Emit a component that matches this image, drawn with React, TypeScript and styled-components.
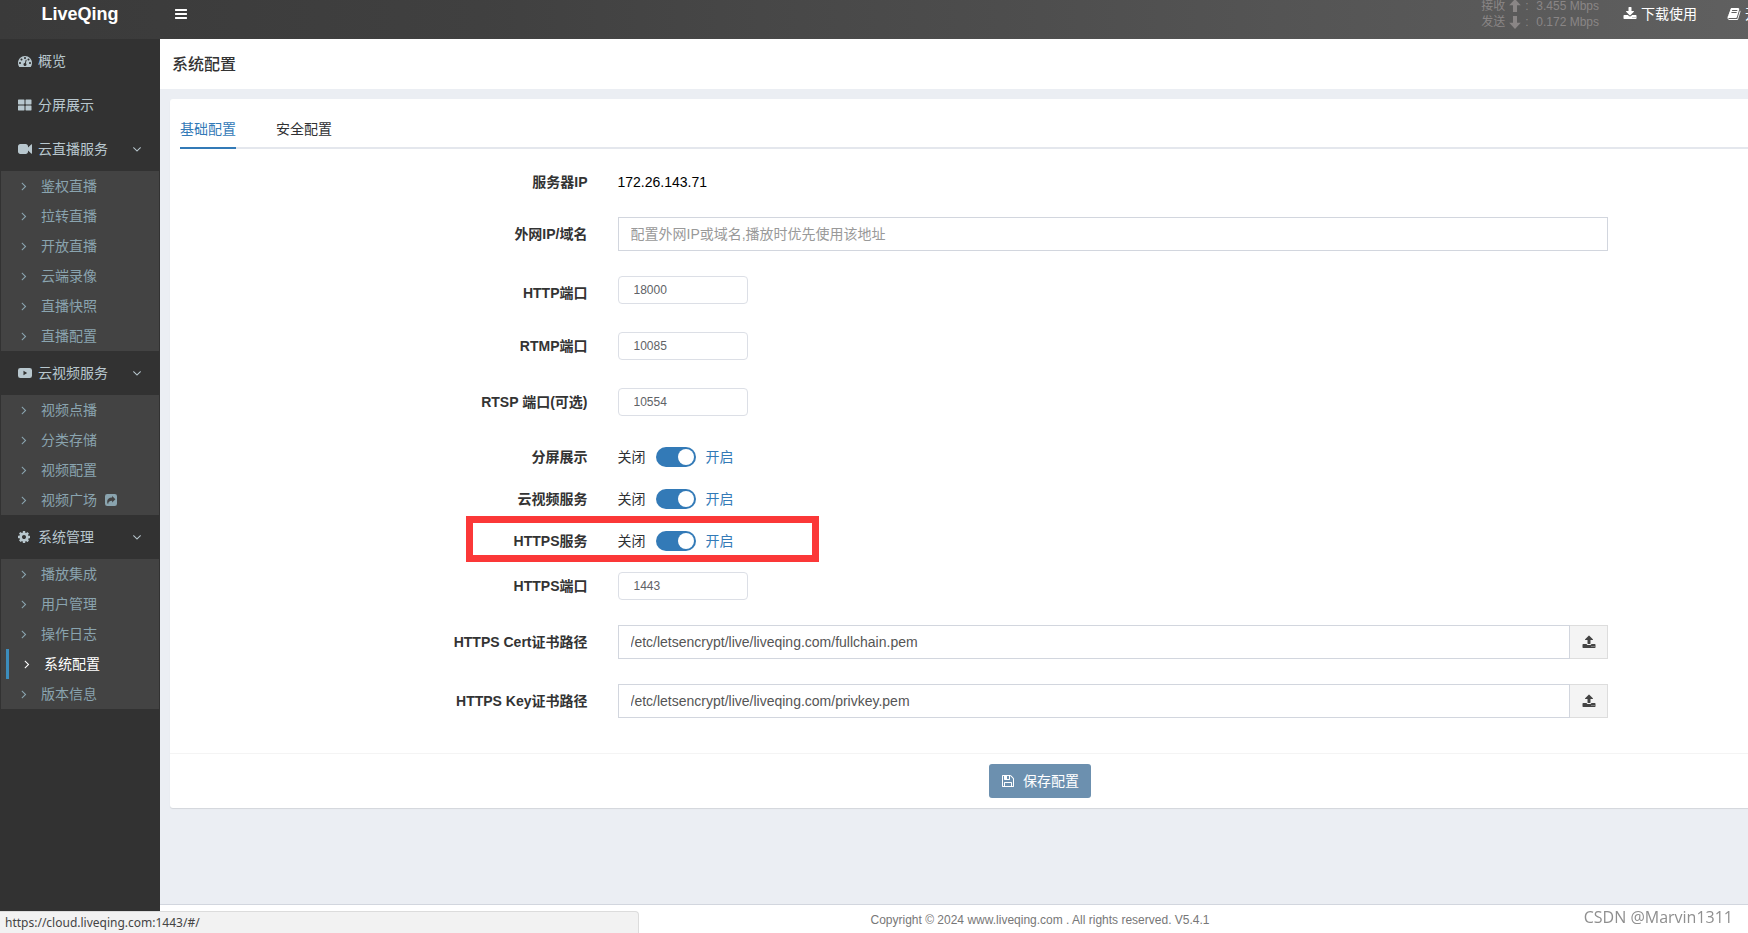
import React, { useId, useState } from "react";
import styled, { createGlobalStyle, css } from "styled-components";

const GlobalStyle = createGlobalStyle`
  *, *::before, *::after { box-sizing: border-box; }
  body {
    margin: 0;
    background: #ebeef3;
    color: #333;
    font: 14px/20px "Liberation Sans", Arial, "Noto Sans CJK SC", sans-serif;
  }
  button, input { font: inherit; color: inherit; }
  ul { list-style: none; margin: 0; padding: 0; }
  a { color: inherit; text-decoration: none; }
`;

/* ---------- icons ---------- */

const PATHS = {
  bars: "M1664 1344v128q0 26-19 45t-45 19h-1408q-26 0-45-19t-19-45v-128q0-26 19-45t45-19h1408q26 0 45 19t19 45zm0-512v128q0 26-19 45t-45 19h-1408q-26 0-45-19t-19-45v-128q0-26 19-45t45-19h1408q26 0 45 19t19 45zm0-512v128q0 26-19 45t-45 19h-1408q-26 0-45-19t-19-45v-128q0-26 19-45t45-19h1408q26 0 45 19t19 45z",
  angleRight:
    "M1171 960q0 13-10 23l-466 466q-10 10-23 10t-23-10l-50-50q-10-10-10-23t10-23l393-393-393-393q-10-10-10-23t10-23l50-50q10-10 23-10t23 10l466 466q10 10 10 23z",
  angleDown:
    "M1395 736q0 13-10 23l-466 466q-10 10-23 10t-23-10l-466-466q-10-10-10-23t10-23l50-50q10-10 23-10t23 10l393 393 393-393q10-10 23-10t23 10l50 50q10 10 10 23z",
  download:
    "M1344 1344q0-26-19-45t-45-19-45 19-19 45 19 45 45 19 45-19 19-45zm256 0q0-26-19-45t-45-19-45 19-19 45 19 45 45 19 45-19 19-45zm128-224v320q0 40-28 68t-68 28h-1472q-40 0-68-28t-28-68v-320q0-40 28-68t68-28h465l135 136q58 56 136 56t136-56l136-136h464q40 0 68 28t28 68zm-325-569q17 41-14 70l-448 448q-18 19-45 19t-45-19l-448-448q-31-29-14-70 17-39 59-39h256v-448q0-26 19-45t45-19h256q26 0 45 19t19 45v448h256q42 0 59 39z",
  upload:
    "M1344 1472q0-26-19-45t-45-19-45 19-19 45 19 45 45 19 45-19 19-45zm256 0q0-26-19-45t-45-19-45 19-19 45 19 45 45 19 45-19 19-45zm128-224v320q0 40-28 68t-68 28h-1472q-40 0-68-28t-28-68v-320q0-40 28-68t68-28h427q21 56 70.5 92t110.5 36h256q61 0 110.5-36t70.5-92h427q40 0 68 28t28 68zm-325-648q-17 40-59 40h-256v448q0 26-19 45t-45 19h-256q-26 0-45-19t-19-45v-448h-256q-42 0-59-40-17-39 14-69l448-448q18-19 45-19t45 19l448 448q31 30 14 69z",
  grid: "M832 1024v512q0 60-60 60h-712q-60 0-60-60v-512q0-60 60-60h712q60 0 60 60zm0-768v512q0 60-60 60h-712q-60 0-60-60v-512q0-60 60-60h712q60 0 60 60zm896 768v512q0 60-60 60h-648q-60 0-60-60v-512q0-60 60-60h648q60 0 60 60zm0-768v512q0 60-60 60h-648q-60 0-60-60v-512q0-60 60-60h648q60 0 60 60z",
  camera:
    "M1792 352v1088q0 42-39 59-13 5-25 5-27 0-45-19l-403-403v166q0 119-84.5 203.5t-203.5 84.5h-704q-119 0-203.5-84.5t-84.5-203.5v-704q0-119 84.5-203.5t203.5-84.5h704q119 0 203.5 84.5t84.5 203.5v165l403-402q18-19 45-19 12 0 25 5 39 17 39 59z",
  cog: "M1024 896q0-106-75-181t-181-75-181 75-75 181 75 181 181 75 181-75 75-181zm512-109v222q0 12-8 23t-20 13l-185 28q-19 54-39 91 35 50 107 138 10 12 10 25t-9 23q-27 37-99 108t-94 71q-12 0-26-9l-138-108q-44 23-91 38-16 136-29 186-7 28-36 28h-222q-14 0-24.5-8.5t-11.5-21.5l-28-184q-49-16-90-37l-141 107q-10 9-25 9-14 0-25-11-126-114-165-168-7-10-7-23 0-12 8-23 15-21 51-66.5t54-70.5q-27-50-41-99l-183-27q-13-2-21-12.5t-8-23.5v-222q0-12 8-23t19-13l186-28q14-46 39-92-40-57-107-138-10-12-10-24 0-10 9-23 26-36 98.5-107.5t94.5-71.5q13 0 26 10l138 107q44-23 91-38 16-136 29-186 7-28 36-28h222q14 0 24.5 8.5t11.5 21.5l28 184q49 16 90 37l142-107q9-9 24-9 13 0 25 10 129 119 165 170 7 8 7 22 0 12-8 23-15 21-51 66.5t-54 70.5q26 50 41 98l183 28q13 2 21 12.5t8 23.5z",
  gauge:
    "M384 1152q0-53-37.5-90.5t-90.5-37.5-90.5 37.5-37.5 90.5 37.5 90.5 90.5 37.5 90.5-37.5 37.5-90.5zm192-448q0-53-37.5-90.5t-90.5-37.5-90.5 37.5-37.5 90.5 37.5 90.5 90.5 37.5 90.5-37.5 37.5-90.5zm428 481l101-382q6-26-7.5-48.5t-38.5-29.5-48 6.5-30 39.5l-101 382q-60 5-107 43.5t-63 98.5q-20 77 20 146t117 89 146-20 89-117q16-60-6-117t-72-91zm660-33q0-53-37.5-90.5t-90.5-37.5-90.5 37.5-37.5 90.5 37.5 90.5 90.5 37.5 90.5-37.5 37.5-90.5zm-640-640q0-53-37.5-90.5t-90.5-37.5-90.5 37.5-37.5 90.5 37.5 90.5 90.5 37.5 90.5-37.5 37.5-90.5zm448 192q0-53-37.5-90.5t-90.5-37.5-90.5 37.5-37.5 90.5 37.5 90.5 90.5 37.5 90.5-37.5 37.5-90.5zm320 448q0 261-141 483-19 29-54 29h-1402q-35 0-54-29-141-221-141-483 0-182 71-348t191-286 286-191 348-71 348 71 286 191 191 286 71 348z",
  floppy:
    "M512 1536h768v-384h-768v384zm896 0h128v-896q0-14-10-38.5t-20-34.5l-281-281q-10-10-34-20t-39-10v416q0 40-28 68t-68 28h-576q-40 0-68-28t-28-68v-416h-128v1280h128v-416q0-40 28-68t68-28h832q40 0 68 28t28 68v416zm-384-928v-320q0-13-9.5-22.5t-22.5-9.5h-192q-13 0-22.5 9.5t-9.5 22.5v320q0 13 9.5 22.5t22.5 9.5h192q13 0 22.5-9.5t9.5-22.5zm640 32v928q0 40-28 68t-68 28h-1344q-40 0-68-28t-28-68v-1344q0-40 28-68t68-28h928q40 0 88 20t76 48l280 280q28 28 48 76t20 88z",
  book: "M1703 478q40 57 18 129l-275 906q-19 64-76.5 107.5t-122.5 43.5h-923q-77 0-148.5-53.5t-99.5-131.5q-24-67-2-127 0-4 3-27t4-37q1-8-3-21.5t-3-19.5q2-11 8-21t16.5-23.5 16.5-23.5q23-38 45-91.5t30-91.5q3-10 .5-30t-.5-28q3-11 17-28t17-23q21-36 42-92t25-90q1-9-2.5-32t.5-28q4-13 22-30.5t22-22.5q19-26 42.5-84.5t27.5-96.5q1-8-3-25.5t-2-26.5q2-8 9-18t18-23 17-21q8-12 16.5-30.5t15-35 16-36 19.5-32 26.5-23.5 36-11.5 47.5 5.5l-1 3q38-9 51-9h761q74 0 114 56t18 130l-274 906q-36 119-71.5 153.5t-128.5 34.5h-869q-27 0-38 15-11 16-1 43 24 70 144 70h923q29 0 56-15.5t35-41.5l300-987q7-22 5-57 38 15 59 43zm-1064 2q-4 13 2 22.5t20 9.5h608q13 0 25.5-9.5t16.5-22.5l21-64q4-13-2-22.5t-20-9.5h-608q-13 0-25.5 9.5t-16.5 22.5zm-83 256q-4 13 2 22.5t20 9.5h608q13 0 25.5-9.5t16.5-22.5l21-64q4-13-2-22.5t-20-9.5h-608q-13 0-25.5 9.5t-16.5 22.5z",
  play: "M300 256h1192q300 0 300 300v680q0 300-300 300h-1192q-300 0-300-300v-680q0-300 300-300zM700 620v552l470-276z",
  share:
    "M288 128h960q288 0 288 288v960q0 288-288 288h-960q-288 0-288-288v-960q0-288 288-288zM912 380v200q-640 20-640 560q0 150 130 290q-20-420 510-430v200l420-410z",
  arrowUp: "M896 0l740 800h-480v864h-520v-864h-480z",
  arrowDown: "M896 1792l740-800h-480v-864h-520v864h-480z",
};

type IconName = keyof typeof PATHS;

const Glyph = styled.svg`
  flex: none;
  width: 14px;
  height: 14px;
  fill: currentColor;
  fill-rule: evenodd;
`;

const Icon = ({ name }: { name: IconName }) => (
  <Glyph viewBox="0 0 1792 1792" aria-hidden="true">
    <path d={PATHS[name]} />
  </Glyph>
);

/* ---------- frame ---------- */

const Viewport = styled.div`
  overflow: hidden;
`;

const Shell = styled.div`
  display: flex;
  flex-direction: column;
  min-width: 1920px;
  min-height: 100vh;
`;

const Header = styled.header`
  display: flex;
  align-items: center;
  height: 39px;
  padding: 0 104px 11px 0;
  color: #fff;
  background: linear-gradient(to right, #3a3a3a, #404040 25%, #646464);
`;

const Brand = styled.a`
  width: 160px;
  font-size: 18px;
  font-weight: 700;
  text-align: center;
`;

const MenuToggle = styled.button`
  display: flex;
  margin: 0 auto 0 14px;
  padding: 0;
  border: 0;
  background: none;
  cursor: pointer;
`;

const Traffic = styled.dl`
  margin: 0 9px 0 0;
  color: #8a8686;
  font-size: 12px;
  line-height: 16px;
`;

const TrafficRow = styled.div`
  display: flex;
  align-items: center;

  dt {
    display: flex;
    align-items: center;
    gap: 3px;
    width: 55px;
  }
  dd { margin: 0; }
`;

const HeaderLink = styled.a`
  display: flex;
  align-items: center;
  gap: 4px;
  padding: 0 15px;
`;

const Columns = styled.div`
  display: flex;
  flex: 1;
`;

/* ---------- sidebar ---------- */

const Sidebar = styled.nav`
  flex: none;
  width: 160px;
  background: #323232;
`;

const TopLink = styled.a`
  display: flex;
  align-items: center;
  height: 44px;
  padding: 0 16px 0 18px;
  color: #b8c7ce;

  svg:first-child { margin-right: 6px; }
  svg:nth-child(3) { margin-left: auto; }
`;

const SubMenu = styled.ul`
  margin: 0 1px;
  padding-left: 5px;
  background: #434343;
`;

const SubLink = styled.a<{ $active?: boolean }>`
  display: flex;
  align-items: center;
  gap: 8px;
  height: 30px;
  padding-left: 11px;
  color: #8aa4af;

  svg:first-child { margin-right: 2px; }

  ${(p) =>
    p.$active &&
    css`
      border-left: 3px solid #3c8dbc;
      color: #fff;
    `}
`;

interface MenuGroup {
  icon: IconName;
  text: string;
  items?: string[];
}

const MENU: MenuGroup[] = [
  { icon: "gauge", text: "概览" },
  { icon: "grid", text: "分屏展示" },
  {
    icon: "camera",
    text: "云直播服务",
    items: ["鉴权直播", "拉转直播", "开放直播", "云端录像", "直播快照", "直播配置"],
  },
  {
    icon: "play",
    text: "云视频服务",
    items: ["视频点播", "分类存储", "视频配置", "视频广场"],
  },
  {
    icon: "cog",
    text: "系统管理",
    items: ["播放集成", "用户管理", "操作日志", "系统配置", "版本信息"],
  },
];

/* ---------- main area ---------- */

const Main = styled.main`
  display: flex;
  flex: 1;
  flex-direction: column;
  min-width: 0;
`;

const TitleBar = styled.div`
  padding: 16px 12px 14px;
  background: #fff;
`;

const Title = styled.h1`
  margin: 0;
  font-size: 16px;
  font-weight: 500;
  line-height: 20px;
`;

const Content = styled.div`
  flex: 1;
  padding: 10px;
`;

const Card = styled.form`
  border-radius: 3px;
  background: #fff;
  box-shadow: 0 1px 1px rgba(0, 0, 0, 0.1);
`;

const Tabs = styled.div`
  display: flex;
  gap: 40px;
  margin: 0 10px;
  padding-top: 10px;
  box-shadow: inset 0 -2px #e4e7ed;
`;

const Tab = styled.button<{ $active?: boolean }>`
  height: 40px;
  padding: 0;
  border: 0;
  background: none;
  cursor: pointer;
  color: ${(p) => (p.$active ? "#337ab7" : "#303133")};
  box-shadow: ${(p) => (p.$active ? "inset 0 -2px #337ab7" : "none")};
`;

const Fields = styled.div`
  display: flex;
  flex-direction: column;
  padding: 16px 0 35px;
  margin: 0 -5px;
`;

const Row = styled.div<{ $gap: number; $align?: string }>`
  position: relative;
  display: grid;
  grid-template-columns: 3fr 7fr 2fr;
  align-items: ${(p) => p.$align ?? "center"};
  margin-bottom: ${(p) => p.$gap}px;

  > :nth-child(2) { margin: 0 15px; }
`;

const Label = styled.label<{ $drop?: boolean }>`
  padding: ${(p) => (p.$drop ? "7px 15px 0 0" : "0 15px 0 0")};
  font-weight: 700;
  text-align: right;
`;

const Value = styled.output`
  color: #000;
  line-height: 34px;
`;

const Group = styled.div`
  display: flex;
`;

const TextInput = styled.input`
  flex: 1;
  min-width: 0;
  height: 34px;
  padding: 0 12px;
  border: 1px solid #d2d6de;
  border-radius: 0;
  background: #fff;
  color: #555;
  outline: none;

  &::placeholder { color: #999; }
`;

const UploadButton = styled.button`
  display: flex;
  align-items: center;
  justify-content: center;
  width: 38px;
  border: 1px solid #ddd;
  border-left: 0;
  background: #f4f4f4;
  color: #444;
  cursor: pointer;
`;

const PortInput = styled.input`
  width: 130px;
  height: 28px;
  padding: 0 15px;
  border: 1px solid #dcdfe6;
  border-radius: 4px;
  background: #fff;
  color: #606266;
  font-size: 12px;
  outline: none;
`;

const SwitchLine = styled.div`
  display: flex;
  align-items: center;
  gap: 10px;
  height: 34px;
`;

const SwitchText = styled.span<{ $on?: boolean }>`
  color: ${(p) => (p.$on ? "#337ab7" : "#303133")};
`;

const Switch = styled.input`
  appearance: none;
  width: 40px;
  height: 20px;
  margin: 0;
  padding: 2px;
  border-radius: 10px;
  background: #c0ccda;
  cursor: pointer;

  &::before {
    content: "";
    display: block;
    width: 16px;
    height: 16px;
    border-radius: 50%;
    background: #fff;
  }
  &:checked { background: #337ab7; }
  &:checked::before { margin-left: 20px; }
`;

const Highlight = styled.div`
  position: absolute;
  top: -8px;
  bottom: -4px;
  left: 301px;
  width: 353px;
  border: 7px solid #fb3838;
  pointer-events: none;
`;

const CardFooter = styled.div`
  display: flex;
  justify-content: center;
  padding: 10px;
  border-top: 1px solid #f4f4f4;
`;

const SaveButton = styled.button`
  display: flex;
  align-items: center;
  gap: 8px;
  height: 34px;
  padding: 0 12px;
  border: 0;
  border-radius: 3px;
  background: #6c90af;
  color: #fff;
`;

const PageFooter = styled.footer`
  padding: 5px 0 3px;
  border-top: 1px solid #d2d6de;
  background: #fff;
  color: #777;
  font-size: 12px;
  text-align: center;
`;

const StatusBubble = styled.div`
  position: fixed;
  bottom: 0;
  left: 0;
  width: 639px;
  height: 22px;
  padding-left: 5px;
  border: 1px solid #dcdcdc;
  border-width: 1px 1px 0 0;
  border-top-right-radius: 4px;
  background: #f2f2f2;
  color: #444;
  font: 12px/22px "Noto Sans", sans-serif;
`;

const Watermark = styled.div`
  position: fixed;
  right: 15px;
  bottom: 4px;
  color: #8f8f8f;
  font: 16px/24px "Open Sans", sans-serif;
`;

/* ---------- form rows ---------- */

interface PortProps {
  label: string;
  value: string;
  gap: number;
  drop?: boolean;
}

const PortRow = ({ label, value, gap, drop }: PortProps) => {
  const id = useId();
  return (
    <Row $gap={gap} $align={drop ? "start" : undefined}>
      <Label htmlFor={id} $drop={drop}>{label}</Label>
      <PortInput id={id} inputMode="numeric" defaultValue={value} />
    </Row>
  );
};

interface SwitchProps {
  label: string;
  gap: number;
  marked?: boolean;
}

const SwitchRow = ({ label, gap, marked }: SwitchProps) => {
  const id = useId();
  const [on, setOn] = useState(true);
  return (
    <Row $gap={gap}>
      <Label htmlFor={id}>{label}</Label>
      <SwitchLine>
        <SwitchText $on={false}>关闭</SwitchText>
        <Switch
          id={id}
          type="checkbox"
          role="switch"
          checked={on}
          onChange={(e) => setOn(e.target.checked)}
        />
        <SwitchText $on={on}>开启</SwitchText>
      </SwitchLine>
      {marked && <Highlight />}
    </Row>
  );
};

const PathRow = ({ label, value, gap }: PortProps) => {
  const id = useId();
  return (
    <Row $gap={gap}>
      <Label htmlFor={id}>{label}</Label>
      <Group>
        <TextInput id={id} defaultValue={value} />
        <UploadButton type="button" aria-label={label}>
          <Icon name="upload" />
        </UploadButton>
      </Group>
    </Row>
  );
};

export default function App() {
  return (
    <Viewport>
      <GlobalStyle />
      <Shell>
        <Header>
          <Brand href="#/">LiveQing</Brand>
          <MenuToggle type="button" aria-label="菜单">
            <Icon name="bars" />
          </MenuToggle>
          <Traffic>
            <TrafficRow>
              <dt>接收 <Icon name="arrowUp" /> :</dt>
              <dd>3.455 Mbps</dd>
            </TrafficRow>
            <TrafficRow>
              <dt>发送 <Icon name="arrowDown" /> :</dt>
              <dd>0.172 Mbps</dd>
            </TrafficRow>
          </Traffic>
          <HeaderLink href="#/download"><Icon name="download" />下载使用</HeaderLink>
          <HeaderLink href="#/docs"><Icon name="book" />开发文档</HeaderLink>
        </Header>
        <Columns>
          <Sidebar>
            {MENU.map((group) => (
              <React.Fragment key={group.text}>
                <TopLink href="#/">
                  <Icon name={group.icon} />
                  <span>{group.text}</span>
                  {group.items && <Icon name="angleDown" />}
                </TopLink>
                {group.items && (
                  <SubMenu>
                    {group.items.map((text) => (
                      <li key={text}>
                        <SubLink href="#/" $active={text === "系统配置"}>
                          <Icon name="angleRight" />
                          <span>{text}</span>
                          {text === "视频广场" && <Icon name="share" />}
                        </SubLink>
                      </li>
                    ))}
                  </SubMenu>
                )}
              </React.Fragment>
            ))}
          </Sidebar>
          <Main>
            <TitleBar>
              <Title>系统配置</Title>
            </TitleBar>
            <Content>
              <Card onSubmit={(e) => e.preventDefault()}>
                <Tabs role="tablist">
                  <Tab type="button" role="tab" aria-selected="true" $active>基础配置</Tab>
                  <Tab type="button" role="tab" aria-selected="false">安全配置</Tab>
                </Tabs>
                <Fields>
                  <Row $gap={18}>
                    <Label htmlFor="server-ip">服务器IP</Label>
                    <Value id="server-ip">172.26.143.71</Value>
                  </Row>
                  <Row $gap={25}>
                    <Label htmlFor="public-host">外网IP/域名</Label>
                    <Group>
                      <TextInput id="public-host" placeholder="配置外网IP或域名,播放时优先使用该地址" />
                    </Group>
                  </Row>
                  <PortRow label="HTTP端口" value="18000" gap={28} drop />
                  <PortRow label="RTMP端口" value="10085" gap={28} />
                  <PortRow label="RTSP 端口(可选)" value="10554" gap={24} />
                  <SwitchRow label="分屏展示" gap={8} />
                  <SwitchRow label="云视频服务" gap={8} />
                  <SwitchRow label="HTTPS服务" gap={14} marked />
                  <PortRow label="HTTPS端口" value="1443" gap={25} />
                  <PathRow
                    label="HTTPS Cert证书路径"
                    value="/etc/letsencrypt/live/liveqing.com/fullchain.pem"
                    gap={25}
                  />
                  <PathRow
                    label="HTTPS Key证书路径"
                    value="/etc/letsencrypt/live/liveqing.com/privkey.pem"
                    gap={0}
                  />
                </Fields>
                <CardFooter>
                  <SaveButton type="submit"><Icon name="floppy" />保存配置</SaveButton>
                </CardFooter>
              </Card>
            </Content>
            <PageFooter>
              Copyright © 2024 <a href="#/">www.liveqing.com</a> . All rights reserved. V5.4.1
            </PageFooter>
          </Main>
        </Columns>
      </Shell>
      <StatusBubble>https://cloud.liveqing.com:1443/#/</StatusBubble>
      <Watermark>CSDN @Marvin1311</Watermark>
    </Viewport>
  );
}
